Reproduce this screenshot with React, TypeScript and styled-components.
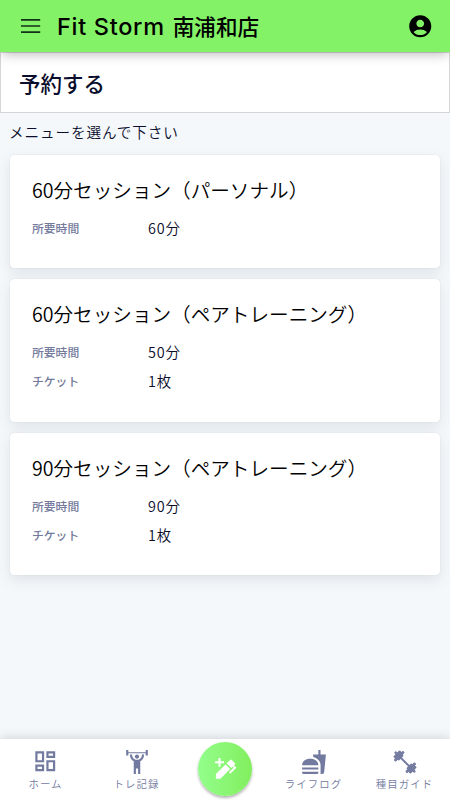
import React from "react";
import styled, { createGlobalStyle } from "styled-components";
import { MdAccountCircle, MdFastfood, MdOutlineDashboard } from "react-icons/md";

const GlobalStyle = createGlobalStyle`
  * { box-sizing: border-box; }
  html, body { margin: 0; padding: 0; }
  body {
    background: #f4f8fb;
    color: #0b0d2c;
    font-family: "Noto Sans CJK JP", sans-serif;
    overflow: hidden;
  }
`;

const Screen = styled.div`
  width: 100%;
  height: 100vh;
  display: flex;
  flex-direction: column;
`;

const Header = styled.header`
  height: 52px;
  flex: none;
  display: flex;
  align-items: center;
  padding: 0 17px 0 21px;
  background: #84f266;
  color: #000;
  z-index: 1;
  box-shadow: 0 3px 12px -2px rgba(0, 0, 0, 0.32);
`;

const MenuIcon = styled.svg`
  width: 20px;
  height: 14px;
  flex: none;
  margin-right: 16px;
`;

const StoreName = styled.h1`
  margin: 0;
  flex: 1;
  display: flex;
  align-items: baseline;
  gap: 8px;
  font-size: 21.6px;
  font-weight: 500;
  line-height: 50px;
  white-space: nowrap;
`;

const Brand = styled.span`
  font-family: Inter, sans-serif;
  font-size: 23.5px;
  font-weight: 500;
  letter-spacing: 0.7px;
`;

const PageTitle = styled.h2`
  margin: 0;
  height: 61px;
  flex: none;
  padding: 0 18px;
  border: 1px solid #d6d6d6;
  background: #fff;
  font-size: 21.5px;
  font-weight: 500;
  line-height: 60px;
`;

const Main = styled.main`
  flex: 1;
  padding: 0 10px;
`;

const Prompt = styled.p`
  margin: 0 0 0 -1px;
  height: 42px;
  font-size: 14.6px;
  font-weight: 350;
  letter-spacing: 0.9px;
  line-height: 38px;
`;

const CardList = styled.div`
  display: flex;
  flex-direction: column;
  gap: 11px;
`;

const Card = styled.section`
  padding: 20px 22px 26px;
  background: #fff;
  border-radius: 4px;
  box-shadow: 0 5px 14px rgba(70, 85, 100, 0.12), 0 0 1px rgba(0, 0, 0, 0.2);
`;

const CardTitle = styled.h3`
  margin: 0 0 9px;
  color: #000;
  font-size: 19.6px;
  font-weight: 350;
  line-height: 29px;
  white-space: nowrap;
`;

const DetailRow = styled.div`
  display: grid;
  grid-template-columns: 116px 1fr;
  align-items: center;
  height: 29.2px;
`;

const DetailLabel = styled.span`
  color: #737a9c;
  font-size: 11.8px;
  font-weight: 500;
`;

const DetailValue = styled.span`
  font-size: 14.4px;
  font-weight: 350;
  letter-spacing: 0.8px;
`;

const BottomNav = styled.nav`
  height: 61px;
  flex: none;
  display: grid;
  grid-template-columns: 91px 91px 1fr 91px 91px;
  background: #fff;
  box-shadow: 0 -2px 10px rgba(0, 0, 0, 0.13);
`;

const NavItem = styled.div`
  display: flex;
  flex-direction: column;
  align-items: center;
  padding-top: 9px;
  color: #737aa0;
`;

const NavIcon = styled.div`
  height: 27px;
  display: flex;
  align-items: center;
  justify-content: center;
`;

const NavLabel = styled.span`
  font-size: 10.4px;
  font-weight: 350;
  letter-spacing: 1.1px;
  line-height: 18px;
  white-space: nowrap;
`;

const ActionButton = styled.button`
  width: 54px;
  height: 54px;
  margin: 3px auto 0;
  padding: 0;
  border: 0;
  border-radius: 50%;
  display: flex;
  align-items: center;
  justify-content: center;
  background: linear-gradient(90deg, #93fe8b, #82ee5e);
  box-shadow: 0 2px 3px rgba(0, 0, 0, 0.3);
`;

const WeightLifter = () => (
  <svg width="26" height="26" viewBox="0 0 24 24" fill="currentColor">
    <path d="M12 5C10.89 5 10 5.89 10 7S10.89 9 12 9 14 8.11 14 7 13.11 5 12 5M22 1V6H20V4H4V6H2V1H4V3H20V1H22M15 11.26V23H13V18H11V23H9V11.26C6.93 10.17 5.5 8 5.5 5.5V5H7.5V5.5C7.5 8 9.5 10 12 10S16.5 8 16.5 5.5V5H18.5V5.5C18.5 8 17.07 10.17 15 11.26Z" />
  </svg>
);

const Dumbbell = () => (
  <svg width="24" height="24" viewBox="-12 -12 24 24" fill="currentColor">
    <g transform="rotate(45)">
      <rect x="-8" y="-1" width="16" height="2" />
      <rect x="-9.6" y="-6.6" width="2.8" height="13.2" rx="1" />
      <rect x="-12.2" y="-4.6" width="2.9" height="9.2" rx="1" />
      <rect x="-14.2" y="-1.2" width="2.4" height="2.4" />
      <rect x="-7.2" y="-3.6" width="1.9" height="7.2" rx=".8" />
      <rect x="6.8" y="-6.6" width="2.8" height="13.2" rx="1" />
      <rect x="9.3" y="-4.6" width="2.9" height="9.2" rx="1" />
      <rect x="11.8" y="-1.2" width="2.4" height="2.4" />
      <rect x="5.3" y="-3.6" width="1.9" height="7.2" rx=".8" />
    </g>
  </svg>
);

const PenPlus = () => (
  <svg width="24" height="24" viewBox="0 0 24 24" fill="#fff">
    <path d="M5.5 .9H7.5V4.3H11V6.3H7.5V9.7H5.5V6.3H2V4.3H5.5Z" />
    <path d="M12.5 7.4L17.2 12.1L7.4 21.8H2.9V17Z" />
    <path d="M13.5 6.2L18.3 11L21.8 7.5Q22.5 6.7 21.8 6L18.8 2.9Q18 2.2 17.2 2.9Z" />
    <path d="M20.2 9L22 10.7L16.7 16" fill="none" stroke="#fff" strokeWidth="1.9" />
  </svg>
);

type Detail = { label: string; value: string };
type Menu = { title: string; details: Detail[] };

const menus: Menu[] = [
  { title: "60分セッション（パーソナル）", details: [{ label: "所要時間", value: "60分" }] },
  {
    title: "60分セッション（ペアトレーニング）",
    details: [
      { label: "所要時間", value: "50分" },
      { label: "チケット", value: "1枚" },
    ],
  },
  {
    title: "90分セッション（ペアトレーニング）",
    details: [
      { label: "所要時間", value: "90分" },
      { label: "チケット", value: "1枚" },
    ],
  },
];

export default function App() {
  return (
    <Screen>
      <GlobalStyle />
      <Header>
        <MenuIcon viewBox="0 0 20 14" stroke="#12301a" strokeWidth="1.6">
          <path d="M0 .9H19.2M0 7H19.2M0 13.1H19.2" />
        </MenuIcon>
        <StoreName>
          <Brand>Fit Storm</Brand>
          <span>南浦和店</span>
        </StoreName>
        <MdAccountCircle size={26.5} />
      </Header>
      <PageTitle>予約する</PageTitle>
      <Main>
        <Prompt>メニューを選んで下さい</Prompt>
        <CardList>
          {menus.map((menu) => (
            <Card key={menu.title}>
              <CardTitle>{menu.title}</CardTitle>
              {menu.details.map((detail) => (
                <DetailRow key={detail.label}>
                  <DetailLabel>{detail.label}</DetailLabel>
                  <DetailValue>{detail.value}</DetailValue>
                </DetailRow>
              ))}
            </Card>
          ))}
        </CardList>
      </Main>
      <BottomNav>
        <NavItem>
          <NavIcon><MdOutlineDashboard size={26.5} /></NavIcon>
          <NavLabel>ホーム</NavLabel>
        </NavItem>
        <NavItem>
          <NavIcon><WeightLifter /></NavIcon>
          <NavLabel>トレ記録</NavLabel>
        </NavItem>
        <ActionButton aria-label="記録を追加"><PenPlus /></ActionButton>
        <NavItem>
          <NavIcon><MdFastfood size={26} /></NavIcon>
          <NavLabel>ライフログ</NavLabel>
        </NavItem>
        <NavItem>
          <NavIcon><Dumbbell /></NavIcon>
          <NavLabel>種目ガイド</NavLabel>
        </NavItem>
      </BottomNav>
    </Screen>
  );
}
